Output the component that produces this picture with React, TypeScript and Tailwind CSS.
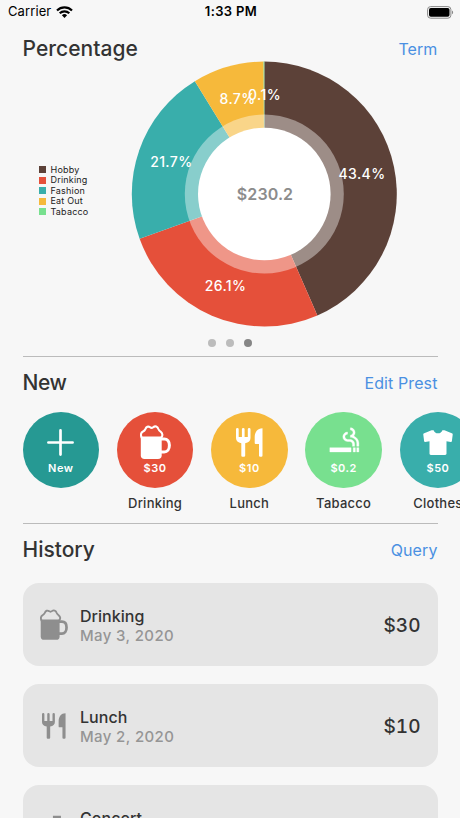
import React from 'react';

const slices = [
    {name: 'Hobby', value: 100, label: '43.4%', color: '#5c4138', x: 362, y: 179},
    {name: 'Drinking', value: 60, label: '26.1%', color: '#e5503a', x: 225.5, y: 290.5},
    {name: 'Fashion', value: 50, label: '21.7%', color: '#39aeab', x: 171.3, y: 166.5},
    {name: 'Eat Out', value: 20, label: '8.7%', color: '#f6b93b', x: 237.5, y: 104},
    {name: 'Tabacco', value: 0.2, label: '0.1%', color: '#78e08f', x: 264.5, y: 100},
]

const CX = 264.3
const CY = 194
const R = 132.5

const getPaths = () => {
    const total = slices.reduce((sum, s) => sum + s.value, 0)
    let angle = 0
    return slices.map(s => {
        const start = angle
        angle += (s.value / total) * Math.PI * 2
        const x1 = CX + R * Math.sin(start)
        const y1 = CY - R * Math.cos(start)
        const x2 = CX + R * Math.sin(angle)
        const y2 = CY - R * Math.cos(angle)
        return `M${CX} ${CY}L${x1} ${y1}A${R} ${R} 0 0 1 ${x2} ${y2}Z`
    })
}

const Mug = ({className}: any) => (
    <svg viewBox="0 0 31 34" className={className} fill="none" stroke="currentColor">
        <path d="M.8 11.5h20.9v18.700a3.800 3.800 0 0 1-3.800 3.800H4.600a3.800 3.800 0 0 1-3.800-3.800z" fill="currentColor" stroke="none"/>
        <path d="M21 13.9h3.200c3.200 0 5.200 2.500 5.200 6.400s-2 6.700-5.200 6.700H21" strokeWidth="3"/>
        <path d="M2 13.200C.4 10.600.6 7.600 3 6.500 4.200 6 4.700 5.500 5.300 4.200 6.300 1.600 8.200 1 10 2.200c1 .8 2.200.8 3.200 0 2-1.600 4.400-.8 5.200 1.800.4 1.200 1 1.900 2.200 2.700 2 1.500 2.600 4 .3 6.300" strokeWidth="2.100" strokeLinejoin="round"/>
    </svg>
)

const Fork = ({className}: any) => (
    <svg viewBox="0 0 27 29" className={className} fill="currentColor">
        <path d="M0 1.300a1.350 1.300 0 0 1 2.700 0V9h3.200V1.300a1.350 1.300 0 0 1 2.700 0V9h3.200V1.300a1.350 1.300 0 0 1 2.700 0V10c0 3-2 4.600-5.300 5.200v12.400a1.200 1.200 0 0 1-1.200 1.200H6.500a1.200 1.200 0 0 1-1.200-1.200V15.200C2 14.600 0 13 0 10z"/>
        <path d="M26.500.2v27.400a1.200 1.200 0 0 1-1.200 1.200h-1.100a1.200 1.200 0 0 1-1.200-1.200V16h-3.300a1 1 0 0 1-1-1V9.500C18.700 4 21.500.2 26.500.2z"/>
    </svg>
)

const Smoke = ({className}: any) => (
    <svg viewBox="0 0 24 24" className={className} fill="currentColor" stroke="currentColor" strokeWidth=".25">
        <path d="M2 16h15v3H2zM18.500 16H20v3h-1.500zM21 16h1.500v3H21zM18.850 7.730c.62-.61 1-1.450 1-2.380C19.850 3.500 18.350 2 16.500 2v1.500c1.020 0 1.850.83 1.850 1.850S17.520 7.200 16.500 7.200v1.500c2.240 0 4.500 1.830 4.500 4.070V15h1.500v-2.240c0-2.220-1.780-4.140-3.650-5.030zM16.030 10.200H14.500c-1.020 0-1.850-.98-1.850-2s.83-1.750 1.850-1.750v-1.500a3.350 3.350 0 0 0 0 6.700h1.530c1.050 0 1.970.74 1.970 2.050V15h1.500v-1.640c0-1.810-1.460-3.160-3.470-3.160z"/>
    </svg>
)

const Shirt = ({className}: any) => (
    <svg viewBox="0 0 30 25" className={className} fill="currentColor">
        <path d="M8.600.2h2c.6 2.100 2.200 3.100 4.400 3.100s3.800-1 4.400-3.100h2l7.400 3.100c.8.300 1 .8.900 1.500l-.8 6.200c-.1.700-.5 1-1.100.9l-4.300-.7v12.400c0 .9-.5 1.400-1.400 1.400H7.900c-.9 0-1.400-.5-1.400-1.400V11.200l-4.300.7c-.6.1-1-.2-1.100-.9L.3 4.800c-.1-.7.100-1.200.9-1.500z"/>
    </svg>
)

const Plus = ({className}: any) => (
    <svg viewBox="0 0 27 27" className={className} fill="none" stroke="currentColor" strokeWidth="2.700" strokeLinecap="round">
        <path d="M13.500 1.400v24.200M1.400 13.500h24.200"/>
    </svg>
)

const presets = [
    {name: '', text: 'New', bg: 'bg-[#269993]', icon: <Plus className="mt-[17px] h-[27px] w-[27px]"/>},
    {name: 'Drinking', text: '$30', bg: 'bg-[#e5503a]', icon: <Mug className="mt-[13px] h-[34px] w-[31px]"/>},
    {name: 'Lunch', text: '$10', bg: 'bg-[#f6b93b]', icon: <Fork className="mt-4 h-[29px] w-[27px]"/>},
    {name: 'Tabacco', text: '$0.2', bg: 'bg-[#78e08f]', icon: <Smoke className="mt-[13px] h-[34px] w-[34px]"/>},
    {name: 'Clothes', text: '$50', bg: 'bg-[#39aeab]', icon: <Shirt className="mt-[18px] h-[25px] w-[30px]"/>},
]

const history = [
    {name: 'Drinking', date: 'May 3, 2020', price: '$30', icon: <Mug className="h-[31px] w-[28px]"/>},
    {name: 'Lunch', date: 'May 2, 2020', price: '$10', icon: <Fork className="h-[26px] w-6"/>},
    {
        name: 'Concert', date: 'May 1, 2020', price: '$80', icon: (
            <svg viewBox="0 0 28 28" className="ml-1 h-7 w-7" fill="currentColor">
                <path d="M10 1.500h9v6h-5v14a5 5 0 1 1-4-4.900z"/>
            </svg>
        )
    },
]

const Header = ({title, link, className, titleClass}: any) => (
    <div className={'flex items-center justify-between ' + className}>
        <h2 className={'text-[21px] leading-7 font-[550] text-[#333] ' + titleClass}>{title}</h2>
        <a href="#" className="text-base leading-6 tracking-[0.1px] text-[#4a90e2]">{link}</a>
    </div>
)

const App = () => {
    const paths = getPaths()

    return (
        <div className="h-[818px] w-[460px] overflow-hidden bg-[#f7f7f7] font-['Inter',sans-serif] text-[#333]">
            {/* status bar */}
            <div className="grid h-6 grid-cols-3 items-center pr-[6px] pl-2 text-[13px] text-black">
                <div className="flex items-center gap-[5px]">
                    <span className="tracking-[0.1px]">Carrier</span>
                    <svg viewBox="0 0 17 12" className="h-3 w-[17px]" fill="none" stroke="currentColor" strokeWidth="2.200">
                        <path d="M1 4.500a10.800 10.800 0 0 1 15 0M3.700 7.300a7 7 0 0 1 9.600 0"/>
                        <path d="M8.500 12 5.900 9.300a3.700 3.700 0 0 1 5.200 0z" fill="currentColor" stroke="none"/>
                    </svg>
                </div>
                <span className="text-center font-semibold tracking-[0.35px]">1:33 PM</span>
                <svg viewBox="0 0 27 13" className="h-[13px] w-[27px] justify-self-end">
                    <rect x=".6" y=".6" width="23.300" height="11.600" rx="3" fill="none" stroke="#888"/>
                    <rect x="2" y="2" width="20.500" height="8.800" rx="1.800"/>
                    <path d="M25 4.500c1.500.4 1.500 3.400 0 3.800z" fill="#888"/>
                </svg>
            </div>

            <div className="px-[22.5px]">
                <Header title="Percentage" link="Term" className="mt-[11px]" titleClass="tracking-[0.05px]"/>
                <div className="-mt-[3px] flex h-[268px] items-center">
                    <ul className="ml-4 w-[91px] pb-[7px]">
                        {slices.map(s => (
                            <li key={s.name} className="flex h-[10.5px] items-center text-[9px] leading-[10px] tracking-[0.2px] text-[#222]">
                                <span className="mr-[5px] h-[7px] w-[7px]" style={{backgroundColor: s.color}}/>
                                {s.name}
                            </li>
                        ))}
                    </ul>
                    <svg viewBox="130 60 269 268" className="h-[268px] w-[269px] shrink-0">
                        {slices.map((s, i) => <path key={s.name} d={paths[i]} fill={s.color}/>)}
                        <circle cx={CX} cy={CY} r="79.500" fill="#fff" fillOpacity=".4"/>
                        <circle cx={CX} cy={CY} r="66.300" fill="#fff"/>
                        <g textAnchor="middle" fill="#fff" className="text-[14px] font-[550] tracking-[0.4px]">
                            {slices.map(s => <text key={s.name} x={s.x} y={s.y}>{s.label}</text>)}
                        </g>
                        <text x="265" y="200" textAnchor="middle" fill="#8c8c8c" className="text-base font-semibold tracking-[0.1px]">$230.2</text>
                    </svg>
                </div>
                <div className="mt-[11px] flex justify-center gap-[10px]">
                    <span className="h-2 w-2 rounded-full bg-[#bcbcbc]"/>
                    <span className="h-2 w-2 rounded-full bg-[#bcbcbc]"/>
                    <span className="h-2 w-2 rounded-full bg-[#868686]"/>
                </div>
                <div className="mt-[9px] border-t border-[#bbb]"/>
                <Header title="New" link="Edit Prest" className="mt-3" titleClass="-tracking-[0.4px]"/>
            </div>

            <div className="mt-[14.5px] flex h-[111.5px] gap-[17.7px] overflow-hidden pl-[22.5px]">
                {presets.map(p => (
                    <div key={p.text} className="flex w-[76.6px] shrink-0 flex-col items-center">
                        <div className={'h-[76.6px] w-[76.6px] shrink-0 overflow-hidden rounded-full text-white ' + p.bg}>
                            <div className="flex h-[49px] justify-center">{p.icon}</div>
                            <div className="text-center text-[11px] leading-[15px] font-semibold tracking-[0.5px]">{p.text}</div>
                        </div>
                        <span className="mt-[6.4px] text-[13px] leading-[18px] font-medium tracking-[0.25px]">{p.name}</span>
                    </div>
                ))}
            </div>

            <div className="px-[22.5px]">
                <div className="border-t border-[#bbb]"/>
                <Header title="History" link="Query" className="mt-3" titleClass="tracking-[0px]"/>
                <div className="mt-[19.3px] flex flex-col gap-[18.4px]">
                    {history.map(h => (
                        <div key={h.name} className="flex h-[82.6px] shrink-0 items-center rounded-2xl bg-[#e5e5e5] pr-[17px] pl-[17px]">
                            <div className="flex w-[29px] justify-center text-[#8e8e8e]">{h.icon}</div>
                            <div className="ml-[11.5px] grow pt-[3px]">
                                <div className="text-base leading-5 font-[550] tracking-[0.05px]">{h.name}</div>
                                <div className="text-[15px] leading-5 font-medium tracking-[0.38px] text-[#959595]">{h.date}</div>
                            </div>
                            <div className="pt-[3px] text-[19px] font-[550] tabular-nums">{h.price}</div>
                        </div>
                    ))}
                </div>
            </div>
        </div>
    )
}

export default App;
